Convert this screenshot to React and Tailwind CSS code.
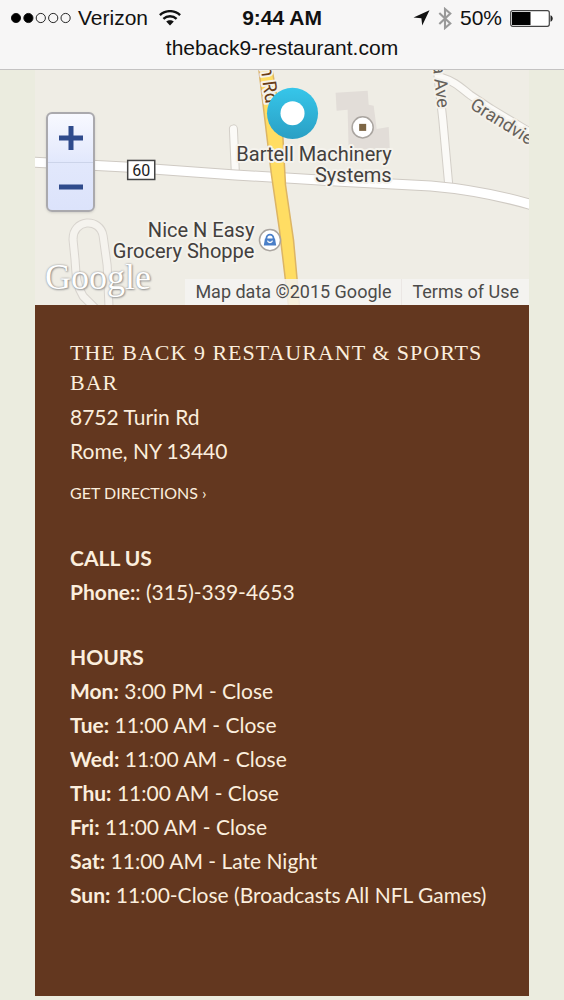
const hours = [
  { day: 'Mon', time: '3:00 PM - Close' },
  { day: 'Tue', time: '11:00 AM - Close' },
  { day: 'Wed', time: '11:00 AM - Close' },
  { day: 'Thu', time: '11:00 AM - Close' },
  { day: 'Fri', time: '11:00 AM - Close' },
  { day: 'Sat', time: '11:00 AM - Late Night' },
  { day: 'Sun', time: '11:00-Close (Broadcasts All NFL Games)' }
];

const SignalDots = () => (
  <svg width="62" height="14" viewBox="0 0 62 14" className="shrink-0">
    {[0, 1, 2, 3, 4].map(i => (
      <circle
        key={i}
        cx={5 + i * 12.4}
        cy="7"
        r="4.6"
        fill={i < 2 ? '#000' : 'none'}
        stroke="#111"
        strokeWidth="0.9"
      />
    ))}
  </svg>
);

const WifiIcon = () => (
  <svg width="22" height="16" viewBox="0 0 22 16" className="shrink-0">
    <g fill="none" stroke="#111" strokeWidth="2.4">
      <path d="M0.9 5.2 C6.5 -0.2 15.5 -0.2 21.1 5.2" />
      <path d="M4.4 8.9 C8.2 5.3 13.8 5.3 17.6 8.9" />
    </g>
    <path d="M11 15.5 L7.2 11.5 C9.3 9.7 12.7 9.7 14.8 11.5 Z" fill="#111" />
  </svg>
);

const LocationIcon = () => (
  <svg width="17" height="16" viewBox="0 0 17 16">
    <path d="M16.5 0.3 L9.2 15.6 L8.4 8.3 L0.5 7.5 Z" fill="#111" />
  </svg>
);

const BluetoothIcon = () => (
  <svg width="14" height="23" viewBox="0 0 14 23">
    <path d="M1.3 6 L12.3 16.5 L7 21 V2 L12.3 6.5 L1.3 17" fill="none" stroke="#999" strokeWidth="2.1" />
  </svg>
);

const BatteryIcon = () => (
  <svg width="43" height="17" viewBox="0 0 43 17">
    <rect x="0.7" y="0.7" width="38.6" height="15.6" rx="2" fill="#fff" stroke="#444" strokeWidth="1.2" />
    <rect x="2" y="2" width="18.5" height="13" fill="#000" />
    <path d="M40.5 5.2 C43.4 6 43.4 11 40.5 11.8 Z" fill="#222" />
  </svg>
);

const StatusBar = () => (
  <header className="border-b border-[#c4c2c2] bg-[#f7f6f6] pt-[3px] pb-[6px] font-['Liberation_Sans',sans-serif] text-[21px] leading-[30px] text-[#111]">
    <div className="grid grid-cols-[1fr_auto_1fr] items-center px-[11px]">
      <div className="flex items-center gap-[5px]">
        <SignalDots />
        <span>Verizon</span>
        <span className="ml-[6px]">
          <WifiIcon />
        </span>
      </div>
      <span className="font-bold">9:44 AM</span>
      <div className="flex items-center justify-end gap-2">
        <LocationIcon />
        <BluetoothIcon />
        <span>50%</span>
        <BatteryIcon />
      </div>
    </div>
    <p className="text-center">theback9-restaurant.com</p>
  </header>
);

const StreetMap = () => (
  <svg
    viewBox="0 0 493 235"
    preserveAspectRatio="xMidYMid slice"
    className="block h-full w-full font-['Roboto',sans-serif]"
    role="img"
    aria-label="Map of Turin Rd"
  >
    <defs>
      <linearGradient id="pin" x1="0" y1="0" x2="0" y2="1">
        <stop offset="0" stopColor="#36c6ea" />
        <stop offset="1" stopColor="#2a9fc4" />
      </linearGradient>
    </defs>
    <rect width="493" height="235" fill="#efede5" />

    {/* buildings */}
    <path d="M300 23 L332 21 L333 35 L338 36 L341 59 L353 57 L354 78 L313 80 L312 40 L301 41 Z" fill="#e2ddd8" />

    {/* side streets */}
    <g fill="none" strokeLinecap="round" strokeLinejoin="round">
      <g stroke="#d3cfc8" strokeWidth="9">
        <path d="M198 59 L200 104" />
        <path d="M401 -5 L407 50 L413 116" />
        <path d="M404 7 C420 12 425 18 434 25 L455 39 L500 66" />
      </g>
      <g stroke="#fbfaf7" strokeWidth="7">
        <path d="M198 59 L200 104" />
        <path d="M401 -5 L407 50 L413 116" />
        <path d="M404 7 C420 12 425 18 434 25 L455 39 L500 66" />
      </g>
      <path d="M67 245 L48 226 C41 215 41 205 40 190 L38 170 C37 149 65 147 68 166 L72 195 L74 240" stroke="#d8d4ce" strokeWidth="9" />
      <path d="M67 245 L48 226 C41 215 41 205 40 190 L38 170 C37 149 65 147 68 166 L72 195 L74 240" stroke="#f5f3ee" strokeWidth="7" />
    </g>

    {/* route 60 */}
    <g fill="none">
      <path d="M-5 92 L90 97 L200 105 L300 111 L395 116 C430 119 460 124 500 136" stroke="#cfcac3" strokeWidth="11" />
      <path d="M-5 92 L90 97 L200 105 L300 111 L395 116 C430 119 460 124 500 136" stroke="#fff" strokeWidth="9" />
    </g>

    {/* turin rd */}
    <path d="M223 -4 L236 -4 L247 60 L250 115 L258 170 L264 236 L253 236 L244 160 L236 105 Z" fill="#ffdd63" stroke="#dcb565" strokeWidth="1.5" />

    <g fill="#66615a" stroke="#f4f1ea" strokeWidth="4" paintOrder="stroke" strokeLinejoin="round">
      <text fontSize="19" fill="#693c16" transform="translate(225 -3) rotate(82)">n Rd</text>
      <text fontSize="18" transform="translate(397 -5) rotate(84)">a Ave</text>
      <text fontSize="18" transform="translate(433 38) rotate(32)">Grandview</text>
    </g>

    <rect x="92.5" y="90.5" width="27" height="19" fill="#fff" stroke="#444" strokeWidth="1.5" />
    <text x="106" y="106" fontSize="16" textAnchor="middle" fill="#222">60</text>

    <g fontSize="20" fill="#43403d" stroke="#f5f3ed" strokeWidth="4" paintOrder="stroke" strokeLinejoin="round" textAnchor="end">
      <text x="356" y="91">Bartell Machinery</text>
      <text x="356" y="112">Systems</text>
      <text x="219" y="167">Nice N Easy</text>
      <text x="219" y="188">Grocery Shoppe</text>
    </g>

    {/* place markers */}
    <circle cx="327" cy="57.5" r="10.5" fill="#fff" stroke="#aaa5a0" strokeWidth="1.5" />
    <rect x="323.5" y="54" width="7" height="7" fill="#7d6645" />
    <circle cx="234.5" cy="170" r="10.5" fill="#fff" stroke="#aaa5a0" strokeWidth="1.5" />
    <path d="M231 170 v-2 a3.5 3.5 0 0 1 7 0 v2" fill="none" stroke="#4a7fc8" strokeWidth="1.8" />
    <path d="M229.5 168.5 h10 l1.2 7 h-12.4 Z" fill="#4a7fc8" />
    <path d="M232 170.5 a2.6 2.6 0 0 0 5 0" fill="none" stroke="#fff" strokeWidth="1.3" />

    <circle cx="257" cy="43.5" r="25.5" fill="url(#pin)" />
    <circle cx="257" cy="43.5" r="12" fill="#fff" />
  </svg>
);

const MapPanel = () => (
  <section className="relative h-[235px] overflow-hidden">
    <StreetMap />
    <div className="absolute top-[42px] left-[11px] flex h-[100px] w-[49px] flex-col overflow-hidden rounded-md border-2 border-[#aaa9ad] bg-linear-to-b from-[#f8f9ff] via-[#e2e8fc] to-[#dce3fb] text-[#2f4b8c] shadow-sm">
      <button type="button" aria-label="Zoom in" className="flex flex-1 items-center justify-center border-b border-[#ccd4ea]">
        <svg width="24" height="24" viewBox="0 0 24 24">
          <path d="M0 12 H24 M12 0 V24" stroke="currentColor" strokeWidth="5" />
        </svg>
      </button>
      <button type="button" aria-label="Zoom out" className="flex flex-1 items-center justify-center">
        <svg width="24" height="24" viewBox="0 0 24 24">
          <path d="M0 13 H24" stroke="currentColor" strokeWidth="5" />
        </svg>
      </button>
    </div>
    <span className="absolute bottom-[10px] left-[10px] font-['Liberation_Serif',serif] text-[36px] leading-[36px] text-white [text-shadow:0_0_2px_#888,1px_1px_2px_#999]">
      Google
    </span>
    <div className="absolute right-0 bottom-0 flex bg-[#f5f3f2]/85 font-['Roboto',sans-serif] text-[18px] leading-[26px] text-[#4c4b4a]">
      <span className="border-r border-[#ebe7e4] px-[10px]">Map data ©2015 Google</span>
      <a href="#terms" className="px-[10px]">Terms of Use</a>
    </div>
  </section>
);

const App = () => {
  return (
    <div className="min-h-screen border-b border-[#a9aa9f] bg-[#ebecdf]">
      <StatusBar />
      <main className="px-[35px] pb-[4px]">
        <MapPanel />
        <section className="bg-[#63371f] px-[35px] pt-[33px] pb-[84px] font-['Lato',sans-serif] text-[21px] leading-[34px] text-[#fbeedd]">
          <h1 className="font-['Liberation_Serif',serif] text-[22px] leading-[30px] tracking-[1px] uppercase">
            The Back 9 Restaurant &amp; Sports Bar
          </h1>
          <address className="mt-[2px] not-italic">
            8752 Turin Rd
            <br />
            Rome, NY 13440
          </address>
          <a href="#directions" className="mt-[8px] block text-[16px] uppercase">
            Get Directions ›
          </a>

          <h2 className="mt-[31px] font-bold uppercase">Call Us</h2>
          <p>
            <strong>Phone:</strong>: <a href="tel:3153394653">(315)-339-4653</a>
          </p>

          <h2 className="mt-[31px] font-bold uppercase">Hours</h2>
          <ul>
            {hours.map(({ day, time }) => (
              <li key={day}>
                <strong>{day}:</strong> {time}
              </li>
            ))}
          </ul>
        </section>
      </main>
    </div>
  );
};

export default App;
